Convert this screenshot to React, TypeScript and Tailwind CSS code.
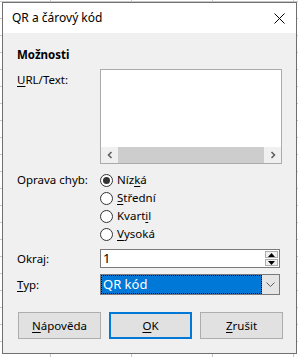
function Key({ children }: { children: string }) {
  return <span className="underline underline-offset-2 decoration-1">{children}</span>
}

function Radio({ checked, children }: { checked?: boolean; children: React.ReactNode }) {
  return (
    <div className="h-[18px] flex items-center gap-[4px]">
      <span className="w-[13px] h-[13px] rounded-full border border-[#333] bg-white flex items-center justify-center">
        {checked && <span className="w-[7px] h-[7px] rounded-full bg-[#333]" />}
      </span>
      <span>{children}</span>
    </div>
  )
}

function Button({ children, primary }: { children: React.ReactNode; primary?: boolean }) {
  return (
    <button
      className={
        primary
          ? 'h-[27px] w-[83px] bg-[#e1e1e1] border-2 border-[#0078d7] text-black'
          : 'h-[27px] w-[83px] bg-[#e1e1e1] border border-[#adadad] text-black'
      }
    >
      {children}
    </button>
  )
}

export default function App() {
  return (
    <div className="w-[298px] h-[357px] overflow-hidden bg-white pt-[2px] pl-[2px] [background-image:linear-gradient(to_right,#c8c8c8_1px,transparent_1px),linear-gradient(to_bottom,#c8c8c8_1px,transparent_1px)] [background-size:81px_17px] [background-position:50px_1px] font-['Noto_Sans',sans-serif] text-[11.5px] text-black leading-none">
      <div className="w-[295px] h-[352px] border border-[#707070] flex flex-col">
        {/* title bar */}
        <div className="h-[30px] bg-white flex items-center justify-between pl-[9px] pr-[9px]">
          <span className="text-[12px]">QR a čárový kód</span>
          <svg width="11" height="11" viewBox="0 0 11 11" className="mr-[2px]">
            <path d="M0.5 0.5 L10.5 10.5 M10.5 0.5 L0.5 10.5" stroke="#000" strokeWidth="1" fill="none" />
          </svg>
        </div>

        {/* body */}
        <div className="flex-1 bg-[#f0f0f0] pl-[14px] pt-[14px]">
          <div className="h-[16px] flex items-center font-bold">Možnosti</div>

          <div className="mt-[6px] grid grid-cols-[83px_182px]">
            <div className="pt-[5px]">
              <Key>U</Key>RL/Text:
            </div>
            <div className="h-[95px] border border-[#ababab] bg-white flex flex-col justify-end">
              <div className="h-[16px] bg-[#f0f0f0] flex items-center">
                <span className="w-[17px] flex justify-center">
                  <svg width="6" height="8" viewBox="0 0 6 8">
                    <path d="M4.5 1 L1.5 4 L4.5 7" stroke="#606060" strokeWidth="1.6" fill="none" />
                  </svg>
                </span>
                <span className="flex-1 h-[16px] bg-[#cdcdcd]" />
                <span className="w-[17px] flex justify-center">
                  <svg width="6" height="8" viewBox="0 0 6 8">
                    <path d="M1.5 1 L4.5 4 L1.5 7" stroke="#606060" strokeWidth="1.6" fill="none" />
                  </svg>
                </span>
              </div>
            </div>
          </div>

          <div className="mt-[7px] grid grid-cols-[83px_182px]">
            <div className="h-[18px] flex items-center">Oprava chyb:</div>
            <div>
              <Radio checked>
                Níz<Key>k</Key>á
              </Radio>
              <Radio>
                <Key>S</Key>třední
              </Radio>
              <Radio>
                Kvart<Key>i</Key>l
              </Radio>
              <Radio>
                <Key>V</Key>ysoká
              </Radio>
            </div>
          </div>

          <div className="mt-[6px] grid grid-cols-[83px_180px] items-center">
            <div>
              Okra<Key>j</Key>:
            </div>
            <div className="h-[19px] border border-[#7a7a7a] bg-white flex">
              <span className="flex-1 flex items-center pl-[2px] text-[13px]">1</span>
              <span className="w-[15px] flex flex-col gap-px p-px">
                <span className="flex-1 bg-[#f0f0f0] border border-[#adadad] flex items-center justify-center">
                  <svg width="7" height="4" viewBox="0 0 7 4">
                    <path d="M0 4 L3.5 0 L7 4 Z" fill="#000" />
                  </svg>
                </span>
                <span className="flex-1 bg-[#f0f0f0] border border-[#adadad] flex items-center justify-center">
                  <svg width="7" height="4" viewBox="0 0 7 4">
                    <path d="M0 0 L3.5 4 L7 0 Z" fill="#000" />
                  </svg>
                </span>
              </span>
            </div>
          </div>

          <div className="mt-[6px] grid grid-cols-[83px_180px] items-center">
            <div>
              <Key>T</Key>yp:
            </div>
            <div className="h-[21px] border border-[#7a7a7a] bg-white flex">
              <span className="flex-1 bg-[#0078d7] border border-dotted border-black text-white flex items-center pl-px text-[13px]">
                QR kód
              </span>
              <span className="w-[17px] bg-[#e5e5e5] flex items-center justify-center">
                <svg width="9" height="5" viewBox="0 0 9 5">
                  <path d="M0.5 0.5 L4.5 4.5 L8.5 0.5" stroke="#606060" strokeWidth="1" fill="none" />
                </svg>
              </span>
            </div>
          </div>

          <div className="mt-[17px] ml-px flex gap-[8px]">
            <Button>
              <Key>N</Key>ápověda
            </Button>
            <Button primary>
              <Key>O</Key>K
            </Button>
            <Button>
              <Key>Z</Key>rušit
            </Button>
          </div>
        </div>
      </div>
    </div>
  )
}
